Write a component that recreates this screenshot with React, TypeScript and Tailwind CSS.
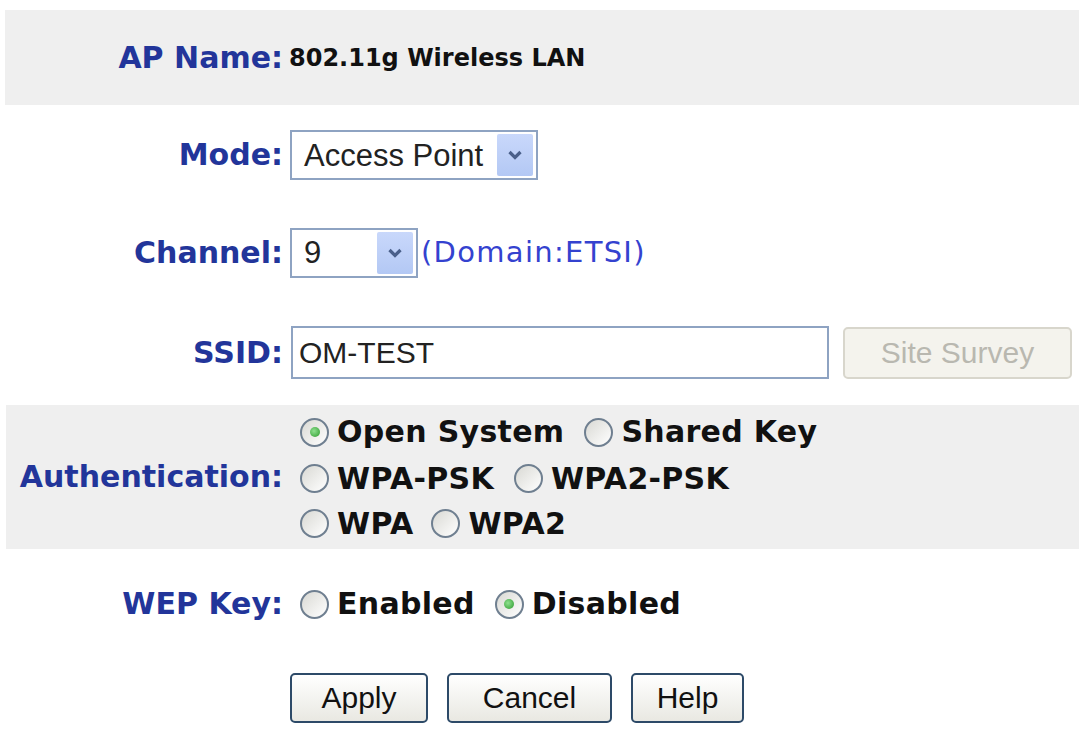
// Wireless settings form (AP mode)

const labelFont = { fontFamily: '"DejaVu Sans", Verdana, sans-serif' };
const arialFont = { fontFamily: '"Liberation Sans", Arial, sans-serif' };

const Label = ({ children }: { children: React.ReactNode }) => (
  <div
    className="w-[283px] shrink-0 text-right text-[30px] font-bold leading-none text-[#22359a]"
    style={labelFont}
  >
    {children}
  </div>
);

const Chevron = () => (
  <svg width="16" height="12" viewBox="0 0 16 12">
    <path d="M2.5 3 L8 8.5 L13.5 3" fill="none" stroke="#4a5f8a" strokeWidth="3.2" />
  </svg>
);

const Select = ({ value, width }: { value: string; width: string }) => (
  <div
    className={`flex h-[50px] items-center justify-between border-2 border-[#8ea3c2] bg-white pl-[12px] pr-[3px] ${width}`}
  >
    <span className="text-[31px] leading-none text-[#222]" style={arialFont}>
      {value}
    </span>
    <span className="flex h-[42px] w-[36px] items-center justify-center rounded-[2px] bg-gradient-to-b from-[#c9d8fb] to-[#b3c8f4]">
      <Chevron />
    </span>
  </div>
);

const Radio = ({ label, checked = false }: { label: string; checked?: boolean }) => (
  <div className="flex items-center">
    <span className="mr-[8px] flex h-[29px] w-[29px] items-center justify-center rounded-full border-2 border-[#6f7f90] bg-gradient-to-br from-[#d9d9d4] to-white">
      {checked && (
        <span className="h-[10px] w-[10px] rounded-full bg-[radial-gradient(circle_at_40%_40%,#8fe08f,#2c9a2c)]" />
      )}
    </span>
    <span className="text-[30px] font-bold leading-none tracking-[0.3px] text-[#111]" style={labelFont}>
      {label}
    </span>
  </div>
);

const Button = ({ label, width }: { label: string; width: string }) => (
  <button
    className={`h-[50px] rounded-[5px] border-2 border-[#2d4a68] bg-gradient-to-b from-white to-[#e9e8e2] text-[30px] leading-none text-[#111] ${width}`}
    style={arialFont}
  >
    {label}
  </button>
);

export default function App() {
  return (
    <div className="h-[735px] w-[1079px] overflow-hidden bg-white pt-[10px]">
      {/* AP name */}
      <div className="ml-[5px] flex h-[95px] items-center bg-[#efefef]">
        <div
          className="w-[278px] shrink-0 text-right text-[30px] font-bold leading-none text-[#22359a]"
          style={labelFont}
        >
          AP Name:
        </div>
        <span className="pl-[6px] text-[24px] font-bold leading-none text-[#111]" style={labelFont}>
          802.11g Wireless LAN
        </span>
      </div>

      {/* Mode */}
      <div className="flex h-[100px] items-center">
        <Label>Mode:</Label>
        <div className="pl-[7px]">
          <Select value="Access Point" width="w-[248px]" />
        </div>
      </div>

      {/* Channel */}
      <div className="flex h-[95px] items-center">
        <Label>Channel:</Label>
        <div className="flex items-center pl-[7px]">
          <Select value="9" width="w-[128px]" />
          <span
            className="ml-[3px] text-[29px] leading-none tracking-[1.3px] text-[#3442cf]"
            style={labelFont}
          >
            (Domain:ETSI)
          </span>
        </div>
      </div>

      {/* SSID */}
      <div className="flex h-[105px] items-center">
        <Label>SSID:</Label>
        <div className="flex items-center pl-[8px]">
          <div className="flex h-[53px] w-[538px] items-center border-2 border-[#8ea3c2] bg-white pl-[6px]">
            <span className="text-[30px] leading-none text-[#222]" style={arialFont}>
              OM-TEST
            </span>
          </div>
          <button
            className="ml-[14px] h-[52px] w-[229px] rounded-[5px] border-2 border-[#d8d6cc] bg-[#f4f3ed] text-[30px] leading-none text-[#b9b8b0]"
            style={arialFont}
          >
            Site Survey
          </button>
        </div>
      </div>

      {/* Authentication */}
      <div className="ml-[6px] flex h-[144px] items-center bg-[#efefef]">
        <div
          className="w-[277px] shrink-0 text-right text-[30px] font-bold leading-none text-[#22359a]"
          style={labelFont}
        >
          Authentication:
        </div>
        <div className="flex flex-col pl-[17px]">
          <div className="flex h-[47px] items-center gap-[20px]">
            <Radio label="Open System" checked />
            <Radio label="Shared Key" />
          </div>
          <div className="flex h-[46px] items-center gap-[20px]">
            <Radio label="WPA-PSK" />
            <Radio label="WPA2-PSK" />
          </div>
          <div className="flex h-[44px] items-center gap-[18px]">
            <Radio label="WPA" />
            <Radio label="WPA2" />
          </div>
        </div>
      </div>

      {/* WEP key */}
      <div className="flex h-[110px] items-center">
        <Label>WEP Key:</Label>
        <div className="flex items-center gap-[20px] pl-[17px]">
          <Radio label="Enabled" />
          <Radio label="Disabled" checked />
        </div>
      </div>

      {/* Actions */}
      <div className="mt-[14px] flex gap-[19px] pl-[290px]">
        <Button label="Apply" width="w-[138px]" />
        <Button label="Cancel" width="w-[165px]" />
        <Button label="Help" width="w-[113px]" />
      </div>
    </div>
  );
}
